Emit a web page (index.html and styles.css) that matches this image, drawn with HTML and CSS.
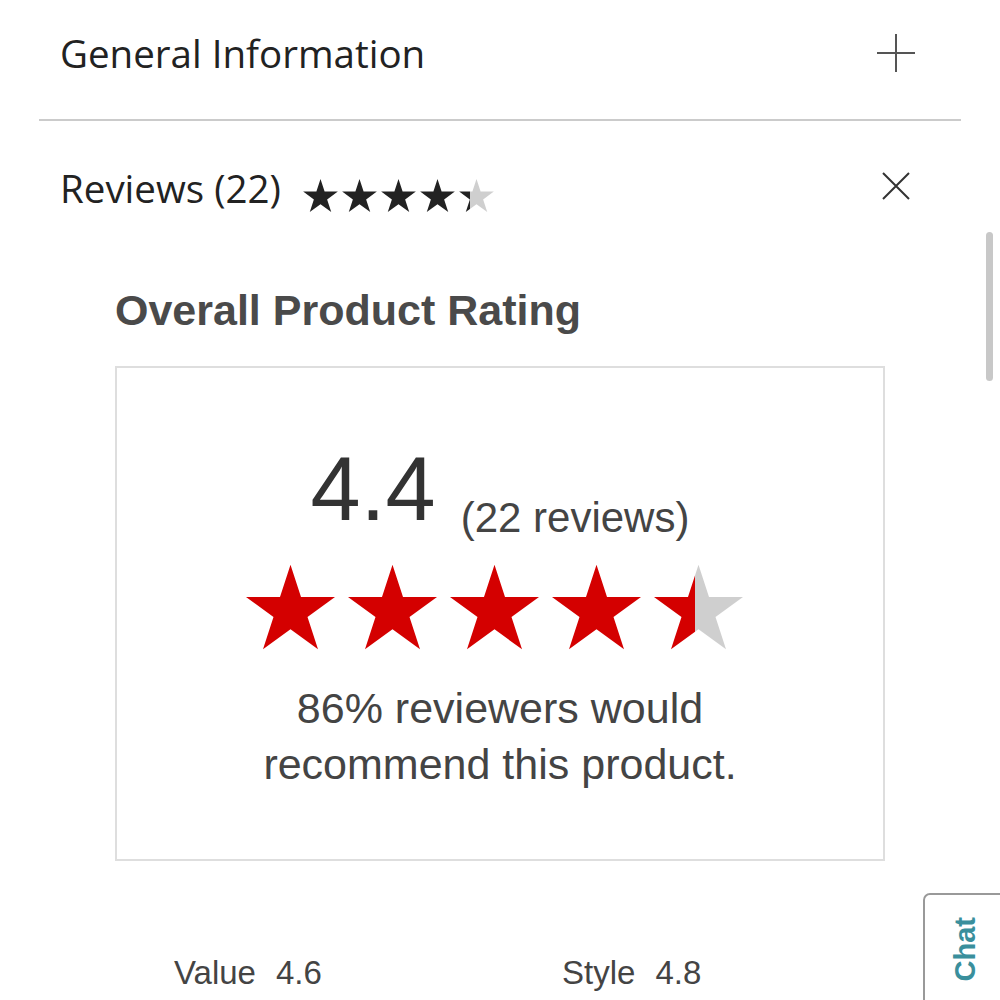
FILE: index.html
```html
<!DOCTYPE html>
<html lang="en">
<head>
  <meta charset="UTF-8" />
  <meta name="viewport" content="width=device-width, initial-scale=1" />
  <title>Reviews</title>
  <link rel="stylesheet" href="styles.css">
</head>
<body>
  <svg class="defs" width="0" height="0" aria-hidden="true">
    <defs>
      <path id="star" d="M50 0L61.23 34.55L97.55 34.55L68.17 55.9L79.39 90.45L50 69.1L20.61 90.45L31.83 55.9L2.45 34.55L38.77 34.55Z" />
      <linearGradient id="part-dark">
        <stop offset="30%" stop-color="#222" />
        <stop offset="30%" stop-color="#cfcfcf" />
      </linearGradient>
      <linearGradient id="part-red">
        <stop offset="46%" stop-color="#d40000" />
        <stop offset="46%" stop-color="#cfcfcf" />
      </linearGradient>
    </defs>
  </svg>

  <div class="accordion">
    <div class="acc-item">
      <div class="acc-head">
        <span class="acc-title">General Information</span>
        <svg class="acc-icon" width="38" height="38" viewBox="0 0 38 38">
          <path d="M19 0V38M0 19H38" stroke="#555" stroke-width="2" fill="none" />
        </svg>
      </div>
    </div>

    <div class="acc-item open">
      <div class="acc-head">
        <span class="acc-title">Reviews (22)</span>
        <span class="mini-stars">
          <svg viewBox="2.45 0 95.1 90.45"><use href="#star" fill="#222" /></svg>
          <svg viewBox="2.45 0 95.1 90.45"><use href="#star" fill="#222" /></svg>
          <svg viewBox="2.45 0 95.1 90.45"><use href="#star" fill="#222" /></svg>
          <svg viewBox="2.45 0 95.1 90.45"><use href="#star" fill="#222" /></svg>
          <svg viewBox="2.45 0 95.1 90.45"><use href="#star" fill="url(#part-dark)" /></svg>
        </span>
        <svg class="acc-icon close" width="28" height="28" viewBox="0 0 28 28">
          <path d="M1 1L27 27M27 1L1 27" stroke="#333" stroke-width="2" fill="none" />
        </svg>
      </div>

      <div class="reviews">
        <h3>Overall Product Rating</h3>

        <div class="rating-box">
          <div class="score">
            <span class="score-value">4.4</span>
            <span class="score-count">(22 reviews)</span>
          </div>
          <div class="big-stars">
            <svg viewBox="2.45 0 95.1 90.45"><use href="#star" fill="#d40000" /></svg>
            <svg viewBox="2.45 0 95.1 90.45"><use href="#star" fill="#d40000" /></svg>
            <svg viewBox="2.45 0 95.1 90.45"><use href="#star" fill="#d40000" /></svg>
            <svg viewBox="2.45 0 95.1 90.45"><use href="#star" fill="#d40000" /></svg>
            <svg viewBox="2.45 0 95.1 90.45"><use href="#star" fill="url(#part-red)" /></svg>
          </div>
          <p class="recommend">86% reviewers would<br>recommend this product.</p>
        </div>

        <div class="attributes">
          <div class="attr"><span>Value</span><span>4.6</span></div>
          <div class="attr"><span>Style</span><span>4.8</span></div>
        </div>
      </div>
    </div>
  </div>

  <div class="scroll-thumb"></div>

  <div class="chat-tab">
    <span>Chat</span>
  </div>
</body>
</html>
```

FILE: styles.css
```css
* {
  box-sizing: border-box;
}

html,
body {
  height: 100%;
  overflow: hidden;
}

body {
  margin: 0;
  background: #fff;
  color: #222;
  font-family: "Liberation Sans", Arial, sans-serif;
}

.defs {
  position: absolute;
}

.accordion {
  padding: 0 39px;
}

.acc-item + .acc-item {
  border-top: 2px solid #cbcbcb;
}

.acc-head {
  display: flex;
  align-items: center;
  padding: 27px 46px 40px 21px;
}

.acc-item.open .acc-head {
  padding-top: 41px;
  padding-bottom: 0;
}

.acc-title {
  font-family: "Open Sans", sans-serif;
  font-size: 38.5px;
  line-height: 52px;
  color: #222;
}

.acc-icon {
  margin-left: auto;
}

.acc-icon.close {
  margin-right: 5px;
  margin-top: -4px;
}

.mini-stars {
  display: flex;
  gap: 4px;
  margin-left: 22px;
  margin-top: 14px;
}

.mini-stars svg {
  width: 35px;
  height: 33px;
}

.reviews {
  padding: 0 76px;
}

.reviews h3 {
  margin: 71px 0 31px;
  font-size: 43px;
  line-height: 50px;
  font-weight: bold;
  color: #4a4a4a;
}

.rating-box {
  border: 2px solid #dedede;
  height: 495px;
  padding-top: 76px;
  text-align: center;
}

.score {
  font-size: 90px;
  line-height: 90px;
}

.score-value {
  color: #333;
}

.score-count {
  font-size: 42px;
  line-height: 42px;
  vertical-align: -12px;
  color: #444;
}

.big-stars {
  display: flex;
  justify-content: center;
  gap: 13px;
  margin-top: 23px;
  padding-right: 12px;
}

.big-stars svg {
  width: 89px;
  height: 90px;
}

.recommend {
  margin: 28px 0 0;
  font-size: 43px;
  line-height: 56px;
  color: #444;
}

.attributes {
  display: grid;
  grid-template-columns: 388px 1fr;
  margin-top: 92px;
  padding-left: 59px;
}

.attr {
  display: flex;
  gap: 20px;
  font-size: 33px;
  line-height: 40px;
  color: #444;
}

.scroll-thumb {
  position: fixed;
  top: 232px;
  right: 7px;
  width: 7px;
  height: 149px;
  border-radius: 4px;
  background: #c8c8c8;
}

.chat-tab {
  position: fixed;
  top: 893px;
  right: -20px;
  width: 97px;
  height: 150px;
  padding: 22px 0 0 25px;
  background: #fff;
  border: 2px solid #999;
  border-top-left-radius: 7px;
}

.chat-tab span {
  display: block;
  writing-mode: vertical-rl;
  transform: rotate(180deg);
  font-size: 29px;
  line-height: 30px;
  font-weight: bold;
  color: #3a8f9c;
}
```
